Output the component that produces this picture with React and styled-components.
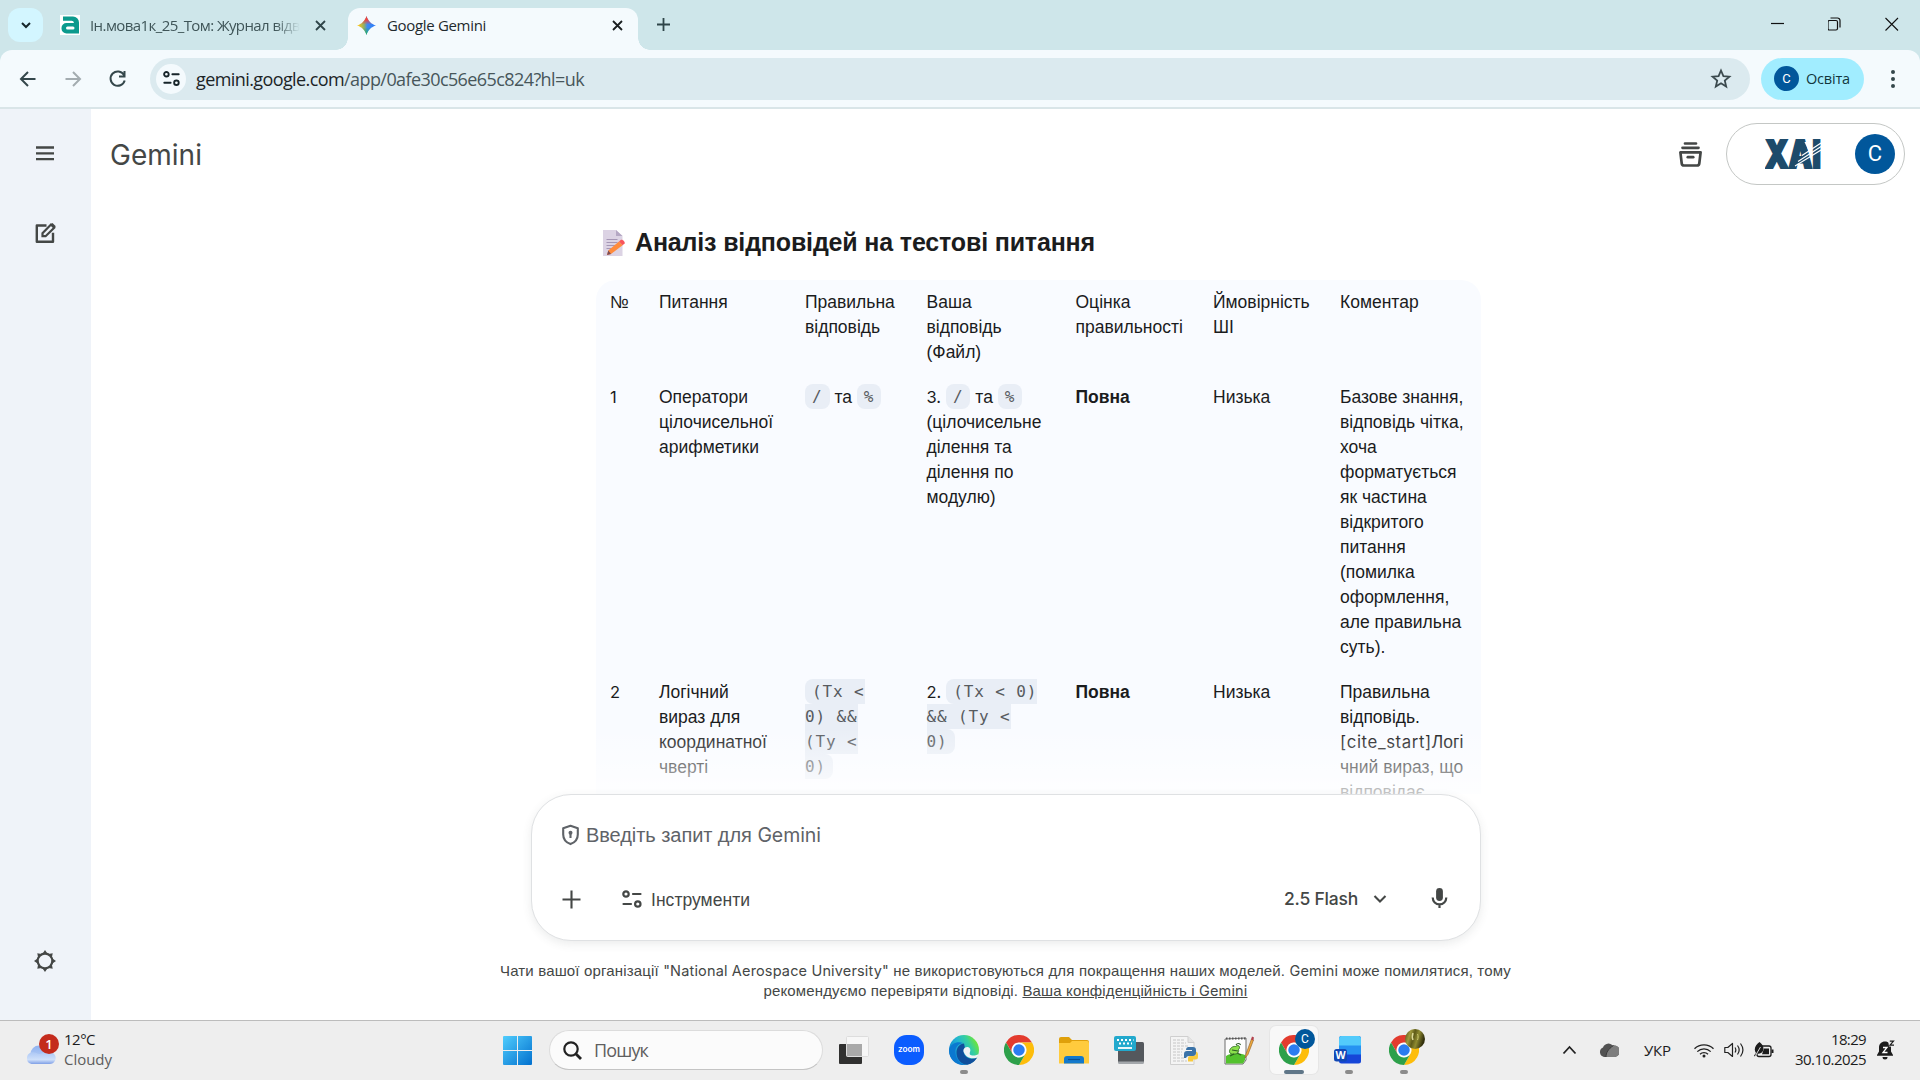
import React, { useLayoutEffect, useRef, useState } from "react";
import styled, { createGlobalStyle, css } from "styled-components";

const ui = `"Open Sans", "Noto Sans", sans-serif`;
const arial = `"Liberation Sans", Arial, sans-serif`;
const google = `Inter, Roboto, sans-serif`;

const GlobalStyle = createGlobalStyle`
  *, *::before, *::after { box-sizing: border-box; }
  html, body { margin: 0; padding: 0; background: #fff; overflow: hidden; }
  body { font-family: ${arial}; color: #1b1c1d; }
  svg { display: block; flex: none; }
`;

/* ---------- text set to a known measure ---------- */

const Measured = styled.span`
  display: inline-block;
  white-space: pre;
`;

function Fit({ width, children }) {
  const ref = useRef(null);
  const [spacing, setSpacing] = useState(0);
  useLayoutEffect(() => {
    const el = ref.current;
    const natural = el.getBoundingClientRect().width;
    setSpacing((width - natural) / el.textContent.length);
  }, [width]);
  return (
    <Measured ref={ref} style={{ letterSpacing: `${spacing}px` }}>
      {children}
    </Measured>
  );
}

/* ---------- frame ---------- */

const Screen = styled.div`
  width: 1920px;
  height: 1080px;
  display: flex;
  flex-direction: column;
  overflow: hidden;
  background: #fff;
`;

/* ---------- tab strip ---------- */

const TabStrip = styled.div`
  height: 50px;
  flex: none;
  display: flex;
  align-items: flex-start;
  background: #cee6ea;
  padding: 8px 0 0 8px;
  font-family: ${ui};
  font-size: 15px;
`;

const TabSearch = styled.button`
  width: 35px;
  height: 34px;
  border: 0;
  padding: 0;
  border-radius: 12px;
  background: #d3f6ff;
  display: grid;
  place-items: center;
`;

const Tab = styled.div`
  display: flex;
  align-items: center;
  height: 42px;
  padding-bottom: 8px;
  color: ${(p) => (p.$active ? "#1f2a2d" : "#3f5558")};
  ${(p) =>
    p.$active
      ? css`
          position: relative;
          width: 290px;
          padding-left: 9px;
          padding-right: 15px;
          border-radius: 12px 12px 0 0;
          background: #f4fafd;
          &::before,
          &::after {
            content: "";
            position: absolute;
            bottom: 0;
            width: 12px;
            height: 12px;
          }
          &::before {
            left: -12px;
            background: radial-gradient(circle at 0 0, transparent 11.5px, #f4fafd 12px);
          }
          &::after {
            right: -12px;
            background: radial-gradient(circle at 100% 0, transparent 11.5px, #f4fafd 12px);
          }
        `
      : css`
          width: 305px;
          padding-left: 17px;
          padding-right: 22px;
        `}
`;

const TabTitle = styled.span`
  flex: 1;
  margin-left: ${(p) => p.$gap}px;
  margin-right: 15px;
  overflow: hidden;
  white-space: nowrap;
  ${(p) =>
    p.$fade &&
    css`
      mask-image: linear-gradient(to right, #000 88%, transparent 100%);
    `}
`;

const NewTab = styled.div`
  margin: 9px 0 0 18px;
`;

const WindowButtons = styled.div`
  margin-left: auto;
  padding: 9px 21px 0 0;
  display: flex;
  gap: 43px;
`;

/* ---------- toolbar ---------- */

const ToolbarBack = styled.div`
  flex: none;
  background: #cee6ea;
`;

const Toolbar = styled.div`
  height: 59px;
  display: flex;
  align-items: center;
  background: #f4fafd;
  border-bottom: 2px solid #d9e5e8;
  border-radius: 12px 12px 0 0;
  padding: 0 15px 0 17px;
`;

const NavButtons = styled.div`
  display: flex;
  gap: 23px;
  margin-right: 21px;
`;

const AddressBar = styled.div`
  width: 1600px;
  height: 42px;
  border-radius: 21px;
  background: #dbeaef;
  display: flex;
  align-items: center;
  padding: 0 18px 0 6px;
  font-family: ${ui};
  font-size: 18px;
  color: #1c2426;
`;

const SiteInfo = styled.div`
  width: 30px;
  height: 30px;
  margin-right: 10px;
  border-radius: 50%;
  background: #f4fafd;
  display: grid;
  place-items: center;
`;

const UrlPath = styled.span`
  color: #47565a;
`;

const Push = styled.div`
  flex: 1;
`;

const ProfileChip = styled.div`
  width: 103px;
  height: 42px;
  margin: 0 20px 0 11px;
  border-radius: 21px;
  background: #a1edff;
  display: flex;
  align-items: center;
  gap: 7px;
  padding-left: 13px;
  font-family: ${ui};
  font-size: 14.5px;
  color: #12363d;
`;

const Avatar = styled.span`
  width: ${(p) => p.$size}px;
  height: ${(p) => p.$size}px;
  flex: none;
  border-radius: 50%;
  background: #01579b;
  color: #fff;
  display: flex;
  align-items: center;
  justify-content: center;
  font: 400 ${(p) => p.$font}px/1 Roboto, sans-serif;
`;

/* ---------- page ---------- */

const Page = styled.div`
  height: 911px;
  flex: none;
  display: flex;
`;

const Rail = styled.nav`
  width: 91px;
  background: #eff3f9;
  display: flex;
  flex-direction: column;
  align-items: center;
  padding: 32px 1px 47px 0;
`;

const RailItem = styled.div`
  width: 24px;
  height: 24px;
  margin-top: ${(p) => p.$top || 0};
`;

const Main = styled.main`
  flex: 1;
  display: flex;
  flex-direction: column;
  align-items: stretch;
`;

const TopBar = styled.header`
  height: 91px;
  flex: none;
  display: flex;
  align-items: center;
  padding: 0 15px 1px 19px;
`;

const Brand = styled.div`
  flex: 1;
  padding-top: 1px;
  font: 400 28px/34px ${google};
  color: #444746;
`;

const Account = styled.div`
  width: 179px;
  height: 62px;
  margin-left: 24px;
  border: 1px solid #c4c7c5;
  border-radius: 31px;
  display: flex;
  align-items: center;
  justify-content: space-between;
  padding: 0 9px 0 38px;
`;

const Scroll = styled.section`
  position: relative;
  height: 594px;
  flex: none;
  overflow: hidden;
  padding: 25px 0 0 505px;
  &::after {
    content: "";
    position: absolute;
    left: 0;
    right: 0;
    bottom: 0;
    height: 66px;
    background: linear-gradient(to bottom, rgba(255, 255, 255, 0), rgba(255, 255, 255, 0.77));
  }
`;

const Heading = styled.h3`
  margin: 0 0 20px 7px;
  height: 35px;
  display: flex;
  align-items: center;
  gap: 9px;
  font: 700 25px/35px ${arial};
`;

const Table = styled.div`
  width: 885px;
  border-radius: 20px 20px 0 0;
  background: #f9fbff;
`;

const Row = styled.div`
  display: grid;
  grid-template-columns: 49px 146px 121.5px 149px 137.5px 127px 141px;
  padding: 10px 0 10px 14px;
  font: 400 17.5px/25px ${arial};
`;

const Cell = styled.div`
  white-space: pre-line;
  font-weight: ${(p) => (p.$strong ? 700 : 400)};
`;

const Latin = styled.span`
  font-family: ${google};
  font-size: ${(p) => p.$size || 16.5}px;
  letter-spacing: ${(p) => (p.$wide ? "0.6px" : "inherit")};
`;

const Code = styled.code`
  position: relative;
  top: -1px;
  font: 400 16px/20px "DejaVu Sans Mono", monospace;
  letter-spacing: 0.87px;
  color: #575b5f;
  background: #e9eef6;
  border-radius: 8px;
  padding: 3px 7px;
`;

/* ---------- composer ---------- */

const Composer = styled.div`
  width: 950px;
  height: 147px;
  flex: none;
  margin-left: 440px;
  border: 1px solid #dfe1e3;
  border-radius: 40px;
  background: #fff;
  box-shadow: 0 3px 10px rgba(60, 64, 67, 0.1);
  display: flex;
  flex-direction: column;
  padding: 25px 31px 0 28px;
  z-index: 1;
`;

const Prompt = styled.div`
  height: 30px;
  display: flex;
  align-items: center;
  gap: 5px;
  color: #5f6368;
  font-size: 20px;
`;

const Tools = styled.div`
  height: 40px;
  margin-top: 29px;
  display: flex;
  align-items: center;
  color: #444746;
  font-size: 17.5px;
`;

const ToolLabel = styled.span`
  margin-left: 9px;
  padding-top: 2px;
  flex: 1;
`;

const Model = styled.span`
  margin-right: 12px;
  font: 500 17.5px/24px ${google};
`;

const Slot = styled.span`
  margin-right: ${(p) => p.$right}px;
`;

const Notice = styled.div`
  margin: 20px 0 0;
  text-align: center;
  font: 400 15px/20px ${arial};
  color: #444746;
`;

const Underlined = styled.a`
  text-decoration: underline;
`;

/* ---------- taskbar ---------- */

const Taskbar = styled.footer`
  height: 60px;
  flex: none;
  background: #eee;
  border-top: 1px solid #bcbcbc;
  display: flex;
  align-items: center;
  padding-bottom: 1px;
  font-family: ${ui};
  font-size: 15px;
  color: #1c1c1c;
`;

const Weather = styled.div`
  width: 503px;
  padding-left: 25px;
  display: flex;
  align-items: center;
  gap: 4px;
`;

const TwoLine = styled.div`
  display: flex;
  flex-direction: column;
  padding-bottom: 2px;
  line-height: 20px;
  align-items: ${(p) => (p.$right ? "flex-end" : "flex-start")};
`;

const Muted = styled.span`
  color: #5d5d5d;
`;

const SearchBox = styled.div`
  width: 274px;
  height: 40px;
  margin: 0 7px 0 17px;
  border: 1px solid #dcdcdc;
  border-bottom-color: #c4c4c4;
  border-radius: 20px;
  background: #fbfbfb;
  display: flex;
  align-items: center;
  gap: 12px;
  padding-left: 13px;
  font-size: 18px;
  color: #5f5f5f;
`;

const AppSlot = styled.div`
  position: relative;
  width: 48px;
  height: 48px;
  margin-right: 7px;
  padding-right: ${(p) => p.$nudge || 0}px;
  border-radius: 6px;
  display: grid;
  place-items: center;
  ${(p) =>
    p.$active &&
    css`
      background: #f8f8f8;
      box-shadow: 0 0 0 1px #e6e6e6;
    `}
  ${(p) =>
    p.$open &&
    css`
      &::after {
        content: "";
        position: absolute;
        bottom: 0;
        left: 50%;
        transform: translateX(-50%);
        width: ${p.$active ? 20 : 8}px;
        height: 4px;
        border-radius: 2px;
        background: ${p.$active ? "#5f7688" : "#8b8b8b"};
      }
    `}
`;

const Badge = styled.span`
  position: absolute;
  top: 3px;
  right: 3px;
  display: block;
`;

const Tray = styled.div`
  margin-left: auto;
  padding-right: 25px;
  display: flex;
  align-items: center;
`;

/* ---------- drawings ---------- */

const Stroke = ({ w = 20, h = w, box = `0 0 ${w} ${h}`, color = "#444746", sw = 2, cap = "butt", children }) => (
  <svg width={w} height={h} viewBox={box} fill="none" stroke={color} strokeWidth={sw} strokeLinecap={cap}>
    {children}
  </svg>
);

const Cross = ({ color }) => (
  <Stroke w={11} color={color} sw={1.8}>
    <path d="M1 1l9 9M10 1l-9 9" />
  </Stroke>
);

const Tune = ({ size = 20, color = "#444746" }) => (
  <Stroke w={size} box="0 0 20 20" color={color} sw={2.2} cap="round">
    <circle cx="4" cy="5" r="2.7" />
    <path d="M11 5h7.5M1.5 15h7.5" />
    <circle cx="15.8" cy="15" r="2.7" />
  </Stroke>
);

const AppA = () => (
  <svg width="20" height="20" viewBox="0 0 20 20">
    <rect width="20" height="20" fill="#fff" />
    <path
      d="M3 1.500H13a6 6 0 0 1 6 6v11H6.500A5 5 0 0 1 1.500 13.500v-.5A5 5 0 0 1 6.500 8H14A2.500 2.500 0 0 0 11.500 5.800H3z"
      fill="#0b9a8d"
    />
    <rect x="6" y="11.500" width="8.500" height="3" rx="1.500" fill="#fff" />
  </svg>
);

const GeminiStar = () => (
  <svg width="19" height="19" viewBox="0 0 24 24">
    <defs>
      <linearGradient id="gs" x1="2" y1="12" x2="22" y2="12" gradientUnits="userSpaceOnUse">
        <stop offset="0" stopColor="#f6c51b" />
        <stop offset=".35" stopColor="#8fae68" />
        <stop offset=".55" stopColor="#3c8af5" />
        <stop offset="1" stopColor="#2f7cf6" />
      </linearGradient>
      <linearGradient id="gr" x1="12" y1="0" x2="12" y2="24" gradientUnits="userSpaceOnUse">
        <stop offset="0" stopColor="#f0443e" />
        <stop offset=".2" stopColor="#f0443e" />
        <stop offset=".45" stopColor="#f0443e" stopOpacity="0" />
        <stop offset=".6" stopColor="#19ae57" stopOpacity="0" />
        <stop offset="1" stopColor="#19ae57" />
      </linearGradient>
    </defs>
    <path d="M12 0c1.700 6 6 10.300 12 12-6 1.700-10.300 6-12 12-1.700-6-6-10.300-12-12 6-1.700 10.300-6 12-12z" fill="url(#gs)" />
    <path d="M12 0c1.700 6 6 10.300 12 12-6 1.700-10.300 6-12 12-1.700-6-6-10.300-12-12 6-1.700 10.300-6 12-12z" fill="url(#gr)" />
  </svg>
);

const Memo = () => (
  <svg width="23" height="26" viewBox="0 0 23 26">
    <path d="M0 0h13l6.500 6v20H0z" fill="#dcd3e4" />
    <path d="M13 0l6.500 6H13z" fill="#b5a8c4" />
    <path d="M3.500 9.500h11M3.500 12.500h11M3.500 15.500h9M3.500 18.500h5" stroke="#a596b5" />
    <path d="M4 25l1.300-4.600L16 11.500l3.600 3.700L8 24z" fill="#ff8b3d" />
    <path d="M4 25l1.300-4.600L8 24z" fill="#7b4b57" />
    <path d="M16 11.500l2-1.700c1.500-.8 4.500 2 3.600 3.800l-2 1.600z" fill="#f8555b" />
  </svg>
);

const Archive = () => (
  <svg width="23" height="25" viewBox="0 0 23 25" fill="none" stroke="#444746" strokeWidth="2.700" strokeLinecap="round" strokeLinejoin="round">
    <path d="M6 1.500h11M3.500 5.800h16" />
    <path d="M1.400 10.300h20.200l-1.300 11a2.400 2.400 0 0 1-2.400 2.200H5.100a2.400 2.400 0 0 1-2.400-2.200z" />
    <path d="M8.800 15.200h5.400" />
  </svg>
);

const MarkText = ({ x, length, children }) => (
  <text
    x={x}
    y="29"
    textLength={length}
    lengthAdjust="spacingAndGlyphs"
    fontFamily="Inter, sans-serif"
    fontWeight="900"
    fontSize="38"
    fill="#1d4b6b"
    stroke="#1d4b6b"
    strokeWidth="2"
  >
    {children}
  </text>
);

const UniversityMark = () => (
  <svg width="56" height="31" viewBox="0 0 56 31">
    <MarkText x="0" length="56">XAI</MarkText>
    <path d="M30 27L56 11M33 22.500L56 7.500M37 16.500L56 4" stroke="#fff" strokeWidth="1.100" />
    <path d="M39.500 3l6 13 1-13z" fill="#fff" />
  </svg>
);

const Chrome = () => (
  <svg width="30" height="30" viewBox="0 0 48 48">
    <path d="M3.200 12A24 24 0 0 1 44.800 12H24A12 12 0 0 0 13.600 30z" fill="#e33b2e" />
    <path d="M44.800 12A24 24 0 0 1 24 48L34.400 30A12 12 0 0 0 24 12z" fill="#fdbd0b" />
    <path d="M24 48A24 24 0 0 1 3.200 12L13.600 30A12 12 0 0 0 34.400 30z" fill="#2da04a" />
    <circle cx="24" cy="24" r="11.500" fill="#fff" />
    <circle cx="24" cy="24" r="9.200" fill="#2c7cf0" />
  </svg>
);

const Edge = () => (
  <svg width="30" height="30" viewBox="0 0 30 30">
    <defs>
      <linearGradient id="ea" x1="2" y1="22" x2="28" y2="8" gradientUnits="userSpaceOnUse">
        <stop offset="0" stopColor="#0a7fd4" />
        <stop offset=".45" stopColor="#22b4d2" />
        <stop offset=".75" stopColor="#35cfa0" />
        <stop offset="1" stopColor="#6be43d" />
      </linearGradient>
    </defs>
    <circle cx="15" cy="15" r="15" fill="url(#ea)" />
    <path d="M.3 14C2 8 9 6 14 8c-6 1-8.500 6-7.500 11 1 6 5 10 10 11C7 31-1 24 .3 14z" fill="#0b78d0" />
    <path d="M15 8.500C10 9 7 13 7.600 19c.6 6 5.400 11 10.800 10.700 4.600-.8 8-4 9.800-7.400-4 2-8.700 2-11.400-1-2.400-2.600-2.800-6-1-9z" fill="#104f9c" />
    <path d="M15.200 18c-2-3 .3-6.300 3.300-6 2.600.4 3.500 2.600 2.500 5-1 2.300.5 3.600 3 3.600 2.700 0 4.800-.8 5.600-2.200-.2 2-.8 3.200-1.500 4-4 2.200-10.900.6-12.900-4.400z" fill="#f1f4f6" />
  </svg>
);

const Folder = () => (
  <svg width="30" height="27" viewBox="0 0 30 27">
    <path d="M0 2a2 2 0 0 1 2-2h8l3 3h15a2 2 0 0 1 2 2v3H0z" fill="#dfa00b" />
    <path d="M0 6h11l2-2h15a2 2 0 0 1 2 2v20.500H0z" fill="#ffcb3d" />
    <path d="M5 26.500V22a3 3 0 0 1 3-3h14a3 3 0 0 1 3 3v4.500z" fill="#1379cc" />
    <path d="M9 22.500h12" stroke="#0a4f92" strokeWidth="1.200" />
  </svg>
);

const Keyboard = () => (
  <svg width="30" height="28" viewBox="0 0 30 28">
    <rect x="4" y="6" width="26" height="21" rx="1.500" fill="#54585d" />
    <path d="M4 25.500h26v1a1.500 1.500 0 0 1-1.500 1.500h-23A1.500 1.500 0 0 1 4 26.500z" fill="#a3a7ab" />
    <rect width="22" height="15" rx="2" fill="#22a9cd" />
    <path d="M3 4h16.500M5 7.500h13" stroke="#fff" strokeWidth="2" strokeDasharray="2 2" />
    <path d="M4 12h14" stroke="#fff" strokeWidth="1.800" />
  </svg>
);

const PythonDoc = () => (
  <svg width="28" height="29" viewBox="0 0 28 29">
    <path d="M.5 .5h17.500l6 6v22H.5z" fill="#f4f4f4" stroke="#cfcfcf" />
    <path d="M18 .5v6h6" fill="#e4e4e4" stroke="#cfcfcf" />
    <path d="M3 4h12M3 7h13M3 10h16M3 13h10M3 16h9M3 19h9M3 22h12M3 25h14" stroke="#c6c6c6" strokeDasharray="3 1" />
    <path d="M18 11h5a3 3 0 0 1 3 3v3a3 3 0 0 1-3 3h-4a3 3 0 0 0-3 2h-2v-4a3 3 0 0 1 3-3h5v-1h-6a3 3 0 0 1 2-3z" fill="#3b73a8" />
    <path d="M26 15.500a3 3 0 0 1 2 3V21a2.500 2.500 0 0 1-2.500 2.500H23v2h-5V22a2 2 0 0 1 2-2h3.500a2.500 2.500 0 0 0 2.500-2.500z" fill="#f9cb3d" />
  </svg>
);

const Notepad = () => (
  <svg width="30" height="29" viewBox="0 0 30 29">
    <path d="M1 3l21-1v22l-3 4H1z" fill="#fdfdfd" stroke="#6f6f6f" />
    <path d="M2 2.500h20" stroke="#555" strokeWidth="2" strokeDasharray="1.500 1.500" />
    <path d="M2 20c5-3 13-3 19-1v5l-2 3.500H2z" fill="#53c22d" />
    <path d="M5.500 15.500c0-3 3-5.500 6-5 3-2.500 5.500.5 3 3 1 3-2 5-4.500 4.500-2.500.6-4.500-.5-4.500-2.500z" fill="#8be04c" stroke="#2d6b20" strokeWidth=".9" />
    <path d="M12 9c1-2 4-2 4.500 0M6 20l4-2M13 17l4 2M8 14l6 1" stroke="#2b5c22" strokeWidth="1.100" fill="none" />
    <path d="M21 22l1-4L27.500 3l2 1L24 18.500z" fill="#eda93e" stroke="#8b5a22" strokeWidth=".6" />
    <path d="M27 3.500l1-3 2 1-.7 3z" fill="#b2414c" />
  </svg>
);

const Word = () => (
  <svg width="27" height="28" viewBox="0 0 27 28">
    <rect x="5" width="22" height="27.500" rx="2.500" fill="#1646d8" />
    <path d="M5 9h22v9.500H5z" fill="#2693f2" />
    <path d="M7.500 0h17A2.500 2.500 0 0 1 27 2.500V9.500H5v-7A2.500 2.500 0 0 1 7.500 0z" fill="#53cbfb" />
    <rect y="13" width="13" height="12.500" rx="2.500" fill="#1248b5" />
    <text x="6.500" y="23" textAnchor="middle" fontFamily="Open Sans, sans-serif" fontWeight="700" fontSize="10.500" fill="#fff">
      W
    </text>
  </svg>
);

const ZoomApp = () => (
  <svg width="30" height="30" viewBox="0 0 30 30">
    <rect width="30" height="30" rx="12.500" fill="#0b5cff" />
    <text x="15" y="17.300" textAnchor="middle" textLength="22" lengthAdjust="spacingAndGlyphs" fontFamily="Inter, sans-serif" fontWeight="600" fontSize="8" fill="#fff">
      zoom
    </text>
  </svg>
);

const TaskView = () => (
  <svg width="30" height="29" viewBox="0 0 30 29">
    <rect y="8" width="23" height="20" rx="1" fill="#30302f" />
    <rect x="7.500" y=".5" width="22" height="20" rx="1" fill="#f7f7f7" stroke="#ddd" />
    <path d="M8 8h15v12H8z" fill="#a9a9a9" />
  </svg>
);

const Start = () => (
  <svg width="29" height="29" viewBox="0 0 29 29">
    <defs>
      <linearGradient id="win" x1="0" y1="0" x2="1" y2="1">
        <stop offset="0" stopColor="#50cdfd" />
        <stop offset="1" stopColor="#0270ce" />
      </linearGradient>
    </defs>
    <path
      d="M1 0h13v14H0V1a1 1 0 0 1 1-1zM15 0h13a1 1 0 0 1 1 1v13H15zM0 15h14v14H1a1 1 0 0 1-1-1zM15 15h14v13a1 1 0 0 1-1 1H15z"
      fill="url(#win)"
    />
  </svg>
);

const CloudWeather = () => (
  <svg width="35" height="34" viewBox="0 0 35 34">
    <defs>
      <linearGradient id="cb" x1="0" y1="0" x2="0" y2="1">
        <stop offset="0" stopColor="#8fb2f0" />
        <stop offset="1" stopColor="#c3d7f7" />
      </linearGradient>
      <linearGradient id="cf" x1="0" y1="0" x2="0" y2="1">
        <stop offset="0" stopColor="#aac6f5" />
        <stop offset=".65" stopColor="#cfe0fa" />
        <stop offset="1" stopColor="#7f9fe6" />
      </linearGradient>
    </defs>
    <circle cx="14" cy="21" r="8.500" fill="url(#cb)" />
    <path d="M6.500 31A6 6 0 0 1 6 19.500c2-.4 4-.2 5.500.5 2 1.500 5 1 7-.5 3.500-1 8-2 11 2A6 6 0 0 1 24.500 31z" fill="url(#cf)" />
    <circle cx="24" cy="11" r="10" fill="#c42b1c" />
    <text x="24" y="15.700" textAnchor="middle" fontFamily="Open Sans, sans-serif" fontSize="13" fontWeight="600" fill="#fff">
      1
    </text>
  </svg>
);

const Wifi = () => (
  <svg width="20" height="15" viewBox="0 0 20 15" fill="none" stroke="#222" strokeWidth="1.300">
    <path d="M.5 5.800a13.400 13.400 0 0 1 19 0M3.300 8.600a9.500 9.500 0 0 1 13.400 0M6 11.300a5.600 5.600 0 0 1 8 0" />
    <circle cx="10" cy="13" r="1.500" fill="#222" stroke="none" />
  </svg>
);

const Volume = () => (
  <svg width="20" height="16" viewBox="0 0 20 16" fill="none" stroke="#222" strokeWidth="1.200" strokeLinejoin="round">
    <path d="M.8 5.500h3L8.500 1.500v13L3.800 10.500h-3z" />
    <path d="M11 5.500c1 1.500 1 3.500 0 5M13.500 3.500c2 2.700 2 6.300 0 9M16.500 1.500c3 4 3 9 0 13" />
  </svg>
);

const Battery = () => (
  <svg width="20" height="16" viewBox="0 0 20 16">
    <rect x="3" y="4" width="14" height="10.500" rx="2" fill="none" stroke="#1c1c1c" strokeWidth="1.300" />
    <path d="M10 6.500h5v5.800H8z" fill="#1c1c1c" />
    <path d="M17.500 7.500h2v3.500h-2z" fill="#1c1c1c" />
    <path d="M5.500 0c3 2.500 5 5.500 3.500 9-1 2-3.500 3-6 2.500L.8 14.500 0 13.500l2-2.500C-1 7 2 2.500 5.500 0z" fill="#1c1c1c" />
    <path d="M1.500 13.500L6.500 5" stroke="#eee" strokeWidth=".9" />
  </svg>
);

const Bell = () => (
  <svg width="18" height="20" viewBox="0 0 18 20">
    <path d="M8 1.500c3.500 0 6 2.500 6 6v4l2 3.500v.8H0V15l2-3.500v-4c0-3.500 2.500-6 6-6z" fill="#1c1c1c" />
    <path d="M5.500 17h5a2.500 2.500 0 0 1-5 0z" fill="#1c1c1c" />
    <path d="M11 0h7v6.500h-6z" fill="#eee" />
    <path d="M12.800 1.200h3.700l-3.500 4h4" fill="none" stroke="#1c1c1c" strokeWidth="1.200" />
    <path d="M6 7.500h4l-4 5h4.500" fill="none" stroke="#fff" strokeWidth="1.300" />
  </svg>
);

const MelonBadge = () => (
  <svg width="20" height="20" viewBox="0 0 20 20">
    <defs>
      <linearGradient id="melon" x1="0" y1="0" x2="1" y2=".3">
        <stop offset="0" stopColor="#4c4a14" />
        <stop offset=".3" stopColor="#a09a3c" />
        <stop offset=".5" stopColor="#5e5a18" />
        <stop offset=".7" stopColor="#8f8b30" />
        <stop offset="1" stopColor="#33300d" />
      </linearGradient>
    </defs>
    <circle cx="10" cy="10" r="10" fill="url(#melon)" />
    <path d="M8 4c-1 3-1 5 0 7" stroke="#dedb98" strokeWidth="1.500" fill="none" />
    <path d="M12.500 5c.8 2 .8 4 0 6" stroke="#c9c570" strokeWidth="1" fill="none" />
  </svg>
);

/* ---------- data ---------- */

const rows = [
  ["№", "Питання", "Правильна\nвідповідь", "Ваша\nвідповідь\n(Файл)", "Оцінка\nправильності", "Ймовірність\nШІ", "Коментар"],
  [
    <Latin>1</Latin>,
    "Оператори\nцілочисельної\nарифметики",
    <><Code>/</Code> та <Code>%</Code></>,
    <><Latin>3.</Latin> <Code>/</Code> та <Code>%</Code>{"\n(цілочисельне\nділення та\nділення по\nмодулю)"}</>,
    "Повна",
    "Низька",
    "Базове знання,\nвідповідь чітка,\nхоча\nформатується\nяк частина\nвідкритого\nпитання\n(помилка\nоформлення,\nале правильна\nсуть).",
  ],
  [
    <Latin>2</Latin>,
    "Логічний\nвираз для\nкоординатної\nчверті",
    <Code>{"(Tx <\n0) &&\n(Ty <\n0)"}</Code>,
    <><Latin>2.</Latin> <Code>{"(Tx < 0)\n&& (Ty <\n0)"}</Code></>,
    "Повна",
    "Низька",
    <>{"Правильна\nвідповідь.\n"}<Latin $size={16.8} $wide>[cite_start]</Latin>{"Логі\nчний вираз, що\nвідповідає"}</>,
  ],
];

/* ---------- app ---------- */

export default function App() {
  return (
    <Screen>
      <GlobalStyle />
      <TabStrip>
        <TabSearch>
          <Stroke w={12} color="#15262a" sw={2}><path d="M2 4l4 4 4-4" /></Stroke>
        </TabSearch>
        <Tab>
          <AppA />
          <TabTitle $gap={10} $fade><Fit width={221}>Ін.мова1к_25_Том: Журнал відвід</Fit></TabTitle>
          <Cross color="#2f4549" />
        </Tab>
        <Tab $active>
          <GeminiStar />
          <TabTitle $gap={11}><Fit width={99}>Google Gemini</Fit></TabTitle>
          <Cross color="#1a1f20" />
        </Tab>
        <NewTab>
          <Stroke w={15} color="#2f4549" sw={1.8}><path d="M7.500 1v13M1 7.500h13" /></Stroke>
        </NewTab>
        <WindowButtons>
          <Stroke w={14} color="#111" sw={1.2}><path d="M0 6.500h13" /></Stroke>
          <Stroke w={14} color="#111" sw={1.2}>
            <rect x="0" y="3.500" width="9.500" height="9.500" rx="1.500" />
            <path d="M2.500 1h7a2.500 2.500 0 0 1 2.500 2.500v7" />
          </Stroke>
          <Stroke w={14} color="#111" sw={1.1}><path d="M.5 1l12.500 12.500M13 1L.5 13.500" /></Stroke>
        </WindowButtons>
      </TabStrip>

      <ToolbarBack>
        <Toolbar>
          <NavButtons>
            <Stroke w={22} color="#34474b"><path d="M18.500 11H4M11 4l-7 7 7 7" /></Stroke>
            <Stroke w={22} color="#a3acb0"><path d="M3.500 11H18M11 4l7 7-7 7" /></Stroke>
            <Stroke w={22} color="#34474b">
              <path d="M17 7A7.200 7.200 0 1 0 17.700 12.500M17.500 3v5.500H12" />
            </Stroke>
          </NavButtons>
          <AddressBar>
            <SiteInfo><Tune size={17} color="#17252a" /></SiteInfo>
            <Fit width={388}>gemini.google.com<UrlPath>/app/0afe30c56e65c824?hl=uk</UrlPath></Fit>
            <Push />
            <Stroke w={22} color="#3b4a4e" sw={1.8}>
              <path d="M11 2.500l2.400 5.600 6 .5-4.600 4 1.400 5.900L11 15.300l-5.200 3.200 1.400-5.900-4.600-4 6-.5z" />
            </Stroke>
          </AddressBar>
          <ProfileChip>
            <Avatar $size={25} $font={13}>С</Avatar>
            <Fit width={44}>Освіта</Fit>
          </ProfileChip>
          <svg width="18" height="20" viewBox="0 0 18 20" fill="#34474b">
            <circle cx="9" cy="3" r="2" /><circle cx="9" cy="10" r="2" /><circle cx="9" cy="17" r="2" />
          </svg>
        </Toolbar>
      </ToolbarBack>

      <Page>
        <Rail>
          <RailItem>
            <Stroke w={24} sw={2.3}><path d="M3 6.500h18M3 12.300h18M3 18.100h18" /></Stroke>
          </RailItem>
          <RailItem $top="56px">
            <Stroke w={24} sw={2.4}>
              <path d="M13.500 4.500H3.800v16.200H20v-9" strokeLinejoin="round" />
              <path d="M9.500 15.200v-3L18 3.500l3.200 3.200-8.600 8.500z" strokeWidth="2.200" />
              <path d="M17.500 3.500l2-1.500 3.300 3.200-2 2z" fill="#444746" stroke="none" />
            </Stroke>
          </RailItem>
          <RailItem $top="auto">
            <Stroke w={24} sw={2.2}>
              <circle cx="12" cy="12" r="7.300" />
              <path
                d="M12 1l2.400 3.600H9.600zM12 23l-2.400-3.600h4.800zM1 12l3.600-2.400v4.800zM23 12l-3.600 2.400V9.600zM4.300 4.300l4.200.8-3.400 3.400zM19.700 4.300l-.8 4.200-3.400-3.400zM4.300 19.700l.8-4.200 3.400 3.400zM19.700 19.700l-4.200-.8 3.400-3.400z"
                fill="#444746"
                stroke="none"
              />
            </Stroke>
          </RailItem>
        </Rail>

        <Main>
          <TopBar>
            <Brand><Fit width={92}>Gemini</Fit></Brand>
            <Archive />
            <Account>
              <UniversityMark />
              <Avatar $size={40} $font={22}>С</Avatar>
            </Account>
          </TopBar>

          <Scroll>
            <Heading>
              <Memo />
              <Fit width={460}>Аналіз відповідей на тестові питання</Fit>
            </Heading>
            <Table>
              {rows.map((cells, r) => (
                <Row key={r}>
                  {cells.map((cell, c) => (
                    <Cell key={c} $strong={r > 0 && c === 4}>{cell}</Cell>
                  ))}
                </Row>
              ))}
            </Table>
          </Scroll>

          <Composer>
            <Prompt>
              <Stroke w={21} h={22} sw={2.1}>
                <path d="M10.500 1.800l7.300 2.500v6.200c0 4.600-3 8-7.300 9.600-4.300-1.600-7.300-5-7.300-9.600V4.300z" strokeLinejoin="round" stroke="#5f6368" />
                <circle cx="10.500" cy="8.800" r="2" fill="#5f6368" stroke="none" />
                <path d="M10.500 9v5" stroke="#5f6368" />
              </Stroke>
              <Fit width={235}>Введіть запит для <Latin $size={19.5}>Gemini</Latin></Fit>
            </Prompt>
            <Tools>
              <Slot $right={39}>
                <Stroke w={23} sw={2.1}><path d="M11.500 2.500v18M2.500 11.500h18" /></Stroke>
              </Slot>
              <Tune size={20} />
              <ToolLabel><Fit width={99}>Інструменти</Fit></ToolLabel>
              <Model><Fit width={74}>2.5 Flash</Fit></Model>
              <Slot $right={40}>
                <Stroke w={20} sw={2.1}><path d="M4.500 7l5.500 5.500L15.500 7" /></Stroke>
              </Slot>
              <svg width="19" height="22" viewBox="0 0 18 22">
                <rect x="5.600" y="0" width="6.800" height="13" rx="3.400" fill="#444746" />
                <path d="M2.200 9.600a6.800 6.800 0 0 0 13.600 0M9 16.500v3.500" fill="none" stroke="#444746" strokeWidth="2.200" />
              </svg>
            </Tools>
          </Composer>

          <Notice>
            <Fit width={1011}>
              Чати вашої організації <Latin $size={14.5}>"National Aerospace University"</Latin> не використовуються для покращення наших моделей. <Latin $size={14.5}>Gemini</Latin> може помилятися, тому
            </Fit>
            <br />
            <Fit width={484}>
              рекомендуємо перевіряти відповіді. <Underlined>Ваша конфіденційність і <Latin $size={14.5}>Gemini</Latin></Underlined>
            </Fit>
          </Notice>
        </Main>
      </Page>

      <Taskbar>
        <Weather>
          <CloudWeather />
          <TwoLine>
            <Fit width={31}>12°C</Fit>
            <Muted><Fit width={48}>Cloudy</Fit></Muted>
          </TwoLine>
        </Weather>
        <Start />
        <SearchBox>
          <Stroke w={19} color="#222" sw={2.2}>
            <circle cx="8" cy="8" r="6.700" />
            <path d="M13 13l5 5" strokeWidth="2.800" />
          </Stroke>
          <Fit width={54}>Пошук</Fit>
        </SearchBox>
        <AppSlot><TaskView /></AppSlot>
        <AppSlot><ZoomApp /></AppSlot>
        <AppSlot $open><Edge /></AppSlot>
        <AppSlot><Chrome /></AppSlot>
        <AppSlot><Folder /></AppSlot>
        <AppSlot><Keyboard /></AppSlot>
        <AppSlot><PythonDoc /></AppSlot>
        <AppSlot><Notepad /></AppSlot>
        <AppSlot $open $active>
          <Chrome />
          <Badge><Avatar $size={20} $font={12}>С</Avatar></Badge>
        </AppSlot>
        <AppSlot $open $nudge={4}><Word /></AppSlot>
        <AppSlot $open>
          <Chrome />
          <Badge><MelonBadge /></Badge>
        </AppSlot>
        <Tray>
          <Slot $right={22}>
            <Stroke w={15} color="#222" sw={1.8}><path d="M1.500 10.500l6-6.500 6 6.500" /></Stroke>
          </Slot>
          <Slot $right={25}>
            <svg width="20" height="14" viewBox="0 0 20 14">
              <path d="M5 14a5 5 0 0 1-1-9.500A6 6 0 0 1 14 2.500 5.700 5.700 0 0 1 16 14z" fill="#525252" />
              <path d="M7 14c0-4 2-8 7.500-11.500A5.700 5.700 0 0 1 16 14z" fill="#7d7d7d" />
              <path d="M7 14c0-4 2-8 7.500-11.500" stroke="#3b3b3b" fill="none" />
            </svg>
          </Slot>
          <Slot $right={23}><Fit width={27}>УКР</Fit></Slot>
          <Slot $right={10}><Wifi /></Slot>
          <Slot $right={10}><Volume /></Slot>
          <Slot $right={21}><Battery /></Slot>
          <Slot $right={11}>
            <TwoLine $right>
              <Fit width={35}>18:29</Fit>
              <Fit width={71}>30.10.2025</Fit>
            </TwoLine>
          </Slot>
          <Bell />
        </Tray>
      </Taskbar>
    </Screen>
  );
}
